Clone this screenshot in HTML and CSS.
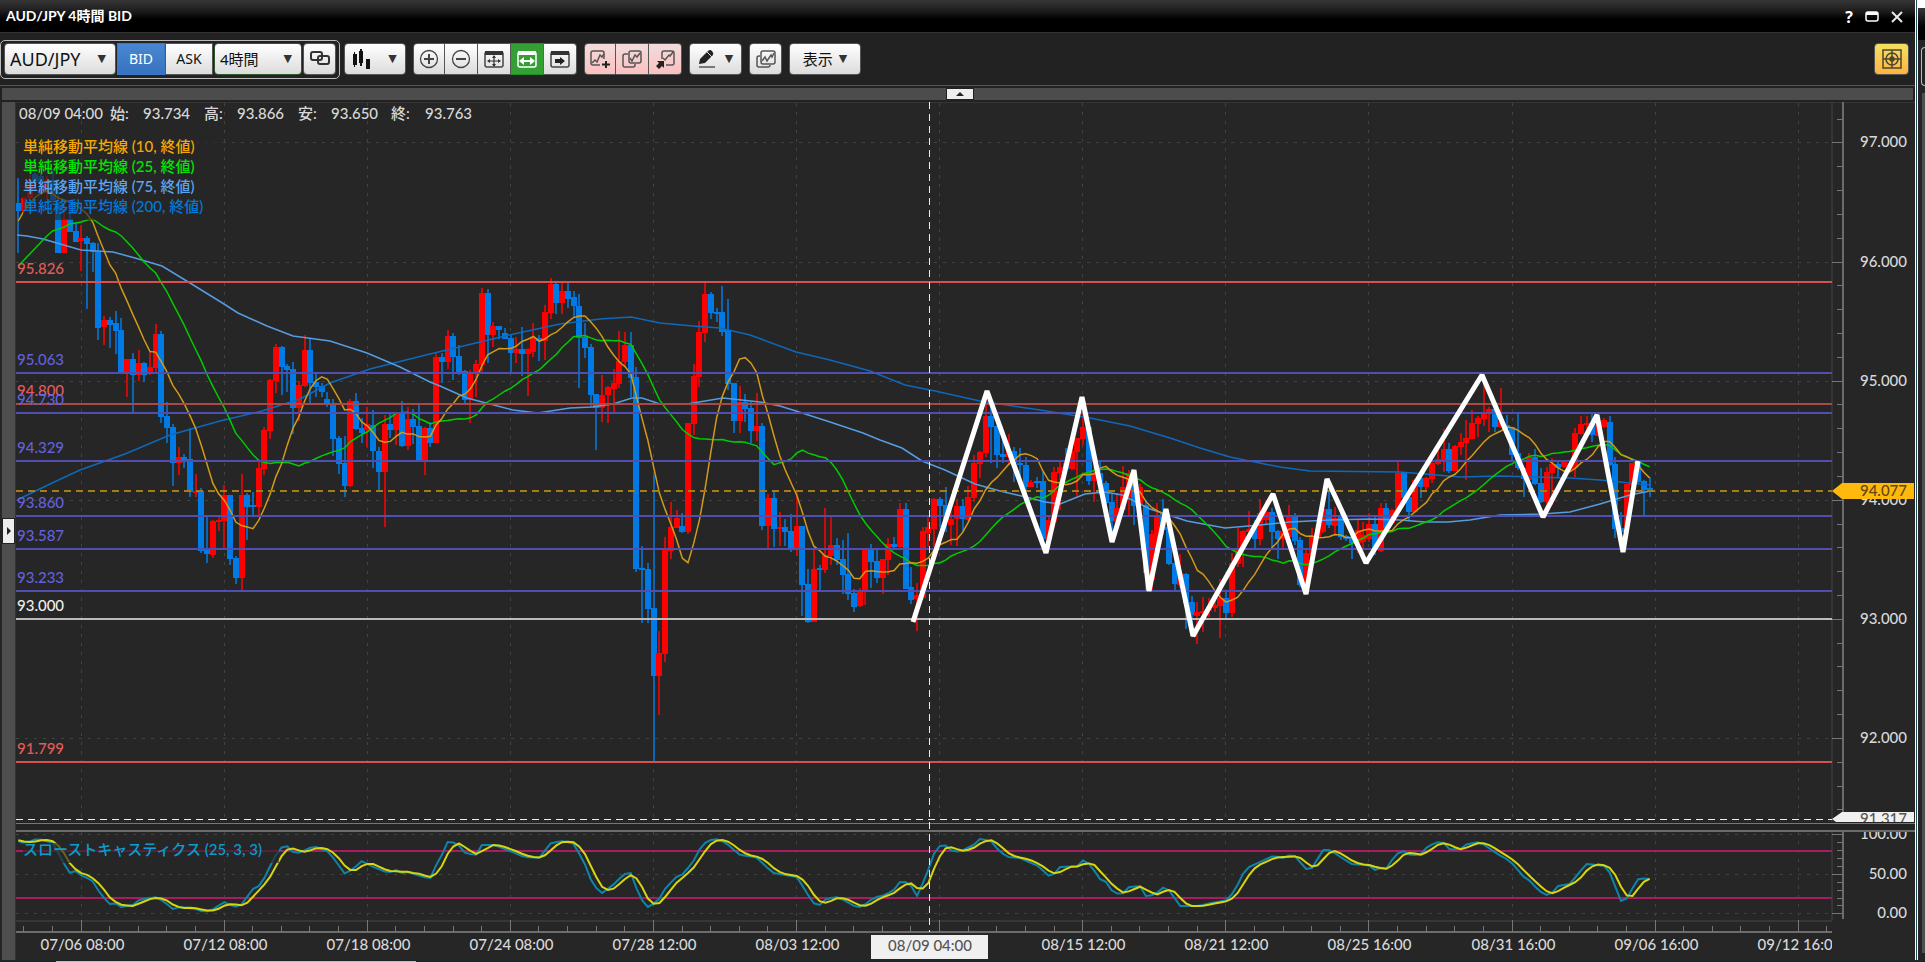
FILE: index.html
```html
<!DOCTYPE html>
<html lang="ja">
<head>
  <meta charset="utf-8">
  <title>AUD/JPY 4時間 BID</title>
  <link rel="stylesheet" href="styles.css">
</head>
<body>
  <div class="desktop">
    <main class="window">
      <header class="titlebar">
        <h1 class="title">AUD/JPY 4時間 BID</h1>
        <div class="window-buttons">
          <button class="window-button" aria-label="ヘルプ">?</button>
          <button class="window-button" aria-label="最大化">
            <svg width="14" height="12" viewBox="0 0 14 12"><rect x="1" y="1" width="12" height="9" rx="2" fill="none" stroke="#fff" stroke-width="1.5"/><path d="M1 1h12v3H1z" fill="#fff"/></svg>
          </button>
          <button class="window-button" aria-label="閉じる">
            <svg width="12" height="12" viewBox="0 0 12 12"><path d="M1 1l10 10M11 1L1 11" stroke="#e8e8e8" stroke-width="2"/></svg>
          </button>
        </div>
      </header>

      <div class="toolbar">
        <div class="frame">
          <div class="picker picker-pair">
            <select aria-label="通貨ペア"><option>AUD/JPY</option></select>
            <span class="arrow">▼</span>
          </div>
          <div class="sides">
            <button class="btn side active">BID</button>
            <button class="btn side">ASK</button>
          </div>
          <div class="picker picker-time">
            <select aria-label="足種"><option>4時間</option></select>
            <span class="arrow">▼</span>
          </div>
          <button class="btn link" aria-label="連動">
            <svg width="20" height="16" viewBox="0 0 20 16" fill="none" stroke="#333" stroke-width="2"><rect x="1" y="1" width="11" height="8" rx="2"/><rect x="8" y="5" width="11" height="8" rx="2"/></svg>
          </button>
        </div>

        <button class="btn candle-type" aria-label="チャート種類">
          <svg width="18" height="20" viewBox="0 0 18 20"><path d="M0 5h4v11H0zM1 3h1v15H1zM6 2h4v12H6zM7 0h2v17H7zM13 10h4v10h-4z" fill="#111"/></svg>
          <span class="arrow">▼</span>
        </button>

        <div class="group">
          <button class="btn" aria-label="拡大">
            <svg width="20" height="20" viewBox="0 0 20 20" fill="none" stroke="#444"><circle cx="10" cy="10" r="8.5" stroke-width="1.3"/><path d="M5 10h10M10 5v10" stroke-width="2"/></svg>
          </button>
          <button class="btn" aria-label="縮小">
            <svg width="20" height="20" viewBox="0 0 20 20" fill="none" stroke="#444"><circle cx="10" cy="10" r="8.5" stroke-width="1.3"/><path d="M5 10h10" stroke-width="2"/></svg>
          </button>
          <button class="btn" aria-label="全体表示">
            <svg width="20" height="18" viewBox="0 0 20 18"><rect x="1" y="2" width="18" height="15" rx="2" fill="none" stroke="#444" stroke-width="1.5"/><path d="M1 1h18v4H1z" fill="#333"/><path d="M5 11h10M10 6v10" stroke="#333" stroke-width="1.2"/><path d="M3 11l3-2v4zM17 11l-3-2v4zM10 5l2 3H8zM10 17l2-3H8z" fill="#333"/></svg>
          </button>
          <button class="btn on" aria-label="横幅固定">
            <svg width="20" height="18" viewBox="0 0 20 18"><rect x="1" y="2" width="18" height="15" rx="2" fill="none" stroke="#fff" stroke-width="1.5"/><path d="M1 1h18v4H1z" fill="#fff"/><path d="M5 11h10" stroke="#fff" stroke-width="2"/><path d="M2 11l5-4v8zM18 11l-5-4v8z" fill="#fff"/></svg>
          </button>
          <button class="btn" aria-label="最新へ">
            <svg width="20" height="18" viewBox="0 0 20 18"><rect x="1" y="2" width="18" height="15" rx="2" fill="none" stroke="#444" stroke-width="1.5"/><path d="M1 1h18v4H1z" fill="#333"/><path d="M5 9h5V7l5 4-5 4v-2H5z" fill="#222"/></svg>
          </button>
        </div>

        <div class="group pink">
          <button class="btn" aria-label="テクニカル追加">
            <svg width="20" height="20" viewBox="0 0 20 20" fill="none" stroke="#555" stroke-width="1.5"><path d="M14 10V4a2 2 0 0 0-2-2H3a2 2 0 0 0-2 2v10a2 2 0 0 0 2 2h7"/><path d="M2 14l3-3 2 2 3-7 2 2 2-3"/><path d="M16 12v7M12 15.5h8" stroke="#222" stroke-width="2"/></svg>
          </button>
          <button class="btn" aria-label="テクニカル一覧">
            <svg width="20" height="20" viewBox="0 0 20 20" fill="none" stroke="#555" stroke-width="1.5"><rect x="7" y="2" width="12" height="12" rx="2"/><path d="M6 5H3a2 2 0 0 0-2 2v9a2 2 0 0 0 2 2h8a2 2 0 0 0 2-2v-1"/><path d="M8 9l2 3 3-6 2 2 3-4"/></svg>
          </button>
          <button class="btn" aria-label="テクニカル呼出">
            <svg width="20" height="20" viewBox="0 0 20 20" fill="none" stroke="#555" stroke-width="1.5"><path d="M7 10V4a2 2 0 0 1 2-2h8a2 2 0 0 1 2 2v10a2 2 0 0 1-2 2h-6"/><path d="M8 9l2 2 4-5 1 1 3-4"/><path d="M2 12h7v7l-2-2-3 3-3-3 3-3z" fill="#222" stroke="none"/></svg>
          </button>
        </div>

        <button class="btn draw" aria-label="描画">
          <svg width="18" height="20" viewBox="0 0 18 20"><path d="M1 15l1-5 8-8q2-2 4 0t1 4l-8 8z" fill="#222"/><path d="M9 3l5 5" stroke="#ddd"/><path d="M1 18h16" stroke="#555" stroke-width="1.5"/></svg>
          <span class="arrow">▼</span>
        </button>
        <button class="btn windows" aria-label="比較チャート">
          <svg width="20" height="20" viewBox="0 0 20 20" fill="none" stroke="#555" stroke-width="1.5"><rect x="5" y="2" width="14" height="13" rx="2"/><path d="M4 7H3a2 2 0 0 0-2 2v7a2 2 0 0 0 2 2h9a2 2 0 0 0 2-2"/><path d="M6 12l3-4 2 4 4-6 1 2 2-4"/></svg>
        </button>
        <button class="btn view">表示 <span class="arrow">▼</span></button>
        <button class="btn target" aria-label="照準">
          <svg width="20" height="20" viewBox="0 0 20 20" fill="none" stroke="#4b4632" stroke-width="1.5"><rect x="1" y="1" width="18" height="18"/><circle cx="10" cy="10" r="6"/><path d="M10 1v18M1 10h18"/><circle cx="10" cy="10" r="2" fill="#4b4632"/></svg>
        </button>
      </div>

      <div class="top-rail"><button class="rail-tab" aria-label="ツールバーを隠す"></button></div>

      <div class="content">
        <div class="side-rail"><button class="side-tab" aria-label="パネルを開く"></button></div>
        <svg class="chart" id="chart" viewBox="16 102 1899 858" role="img" aria-label="AUD/JPY 4時間足チャート"></svg>
      </div>
    </main>

    <aside class="neighbour">
      <div class="neighbour-title"></div>
      <div class="neighbour-frame"></div>
      <div class="neighbour-rail"></div>
    </aside>
  </div>
  <div class="taskbar"><div class="taskbar-item"></div></div>

  <script src="chart.js"></script>
</body>
</html>
```
FILE: styles.css
```css
* {
  box-sizing: border-box;
}

body {
  margin: 0;
  background-color: #262626;
  color: #ddd;
  font-family: Lato, "Noto Sans CJK JP", sans-serif;
  font-size: 15px;
}

.desktop {
  display: flex;
}

.window {
  flex: 1;
  min-width: 0;
  background-color: #222;
}

/* Title bar */
.titlebar {
  display: flex;
  align-items: center;
  justify-content: space-between;
  height: 32px;
  padding: 0 12px 0 6px;
  background: linear-gradient(#363636, #1c1c1c 35%, #000 60%);
}

.title {
  margin: 0;
  color: #fff;
  font-size: 14px;
  line-height: 20px;
  font-weight: bold;
}

.window-buttons {
  display: flex;
  align-items: center;
  gap: 12px;
  padding-top: 2px;
}

.window-button {
  display: flex;
  padding: 0;
  border: 0;
  background: none;
  color: #fff;
  font: bold 16px/16px "Open Sans", sans-serif;
}

/* Toolbar */
.toolbar {
  display: flex;
  align-items: center;
  gap: 7px;
  height: 54px;
  padding: 0 6px 0 0;
  border-top: 1px solid #333;
  border-bottom: 1px solid #565656;
  background-color: #222;
}

.frame {
  display: flex;
  align-items: center;
  gap: 1px;
  height: 39px;
  margin-right: -3px;
  padding: 0 3px;
  border: 1px solid #bbb;
  border-radius: 5px;
}

.btn,
.picker {
  height: 32px;
  border: 1px solid #555;
  border-radius: 4px;
  background: linear-gradient(#fff, #dcdcdc);
  color: #111;
  font: 14px/20px "Noto Sans", "Noto Sans CJK JP", sans-serif;
}

.btn {
  display: flex;
  align-items: center;
  justify-content: center;
  width: 33px;
  padding: 0;
}

.btn svg {
  display: block;
}

.picker {
  display: grid;
  align-items: center;
}

.picker select,
.picker .arrow {
  grid-area: 1 / 1;
}

.picker select {
  width: 100%;
  height: 30px;
  padding: 0 5px;
  border: 0;
  appearance: none;
  background: none;
  color: #111;
  font: inherit;
}

.picker .arrow {
  justify-self: end;
  margin-right: 9px;
  pointer-events: none;
}

.arrow {
  color: #333;
  font: 11px/16px "DejaVu Sans", sans-serif;
}

.picker-pair {
  width: 112px;
  font-size: 18px;
}

.picker-time {
  width: 88px;
  border-color: #2c5a2c;
  font-size: 15px;
}

.sides {
  display: flex;
}

.side {
  width: 48px;
  border-radius: 0;
}

.side.active {
  border-color: #3a78c4;
  background: linear-gradient(#4a87d2, #3672bf);
  color: #fff;
}

.candle-type {
  width: 62px;
  gap: 17px;
}

.group {
  display: flex;
}

.group .btn {
  border-left-width: 0;
  border-radius: 0;
}

.group .btn:first-child {
  width: 32px;
  border-left-width: 1px;
  border-radius: 4px 0 0 4px;
}

.group .btn:last-child {
  border-radius: 0 4px 4px 0;
}

.group .btn.on {
  border-color: #1f8f1f;
  background: #34a034;
}

.group.pink .btn {
  background: linear-gradient(#f3dcdc, #fbc0c0);
}

.draw {
  width: 53px;
  gap: 9px;
}

.view {
  width: 72px;
  gap: 6px;
  font-size: 15px;
}

.target {
  width: 35px;
  margin-left: auto;
  background: linear-gradient(#f3e15f, #ffb340);
}

/* Rails round the chart */
.top-rail {
  display: flex;
  justify-content: center;
  height: 12px;
  margin: 2px;
  padding-left: 4px;
  background-color: #4c4c4c;
}

.rail-tab,
.side-tab {
  display: flex;
  align-items: center;
  justify-content: center;
  padding: 0;
  border: 1px solid #222;
  background-color: #eee;
}

.rail-tab {
  width: 28px;
  height: 12px;
}

.rail-tab::before,
.side-tab::before {
  content: "";
  border: 4px solid transparent;
}

.rail-tab::before {
  border-top: 0;
  border-bottom: 4px solid #222;
}

.content {
  display: flex;
  background-color: #262626;
}

.side-rail {
  display: flex;
  align-items: center;
  width: 14px;
  margin-left: 2px;
  border-right: 1px solid #333;
  background-color: #4e4e4e;
}

.side-tab {
  width: 14px;
  height: 26px;
}

.side-tab::before {
  border-right: 0;
  border-left-color: #222;
}

/* Chart */
.chart {
  display: block;
  flex: 1;
  min-width: 0;
  background-color: #262626;
  font-size: 15px;
  font-weight: 500;
}

.chart text {
  fill: #d8d8d8;
}

.chart line,
.chart polyline {
  fill: none;
}

.grid {
  stroke: #424242;
  stroke-dasharray: 3 6;
}

.axis {
  stroke: #777;
}

.axis-strong {
  stroke: #6c6c6c;
  stroke-width: 2;
}

.border {
  stroke: #363636;
  stroke-width: 2;
}

.up {
  fill: #f00;
}

.down {
  fill: #007be6;
}

.wick-up {
  fill: #c80c0c;
}

.wick-down {
  fill: #0b65b5;
}

.ma {
  stroke-width: 1.5;
}

.ma10 {
  stroke: #d29a18;
}

.ma25 {
  stroke: #0c0;
}

.ma75 {
  stroke: #559ce0;
}

.ma200 {
  stroke: #0e68bb;
}

.level {
  stroke-width: 2;
}

.level-red {
  stroke: #d85050;
}

.level-dim {
  stroke: #a84848;
}

.level-blue {
  stroke: #504eb0;
}

.level-white {
  stroke: #bbb;
}

.chart .text-red {
  fill: #e05c5c;
}

.chart .text-blue {
  fill: #6260dc;
}

.chart .text-white {
  fill: #eee;
}

.chart .text-ma10 {
  fill: #f5a800;
}

.chart .text-ma25 {
  fill: #00e600;
}

.chart .text-ma75 {
  fill: #5aa5f0;
}

.chart .text-ma200 {
  fill: #0078dc;
}

.chart .text-stoch {
  fill: #0a9cd2;
}

.chart .text-tag {
  fill: #555;
}

.chart .text-price {
  fill: #604810;
}

.legend-shade {
  fill: #262626;
  opacity: 0.65;
}

.current {
  stroke: #a67c16;
  stroke-width: 2;
  stroke-dasharray: 7 5;
}

.cross {
  stroke: #eee;
  stroke-dasharray: 7 5;
}

.zigzag {
  stroke: #fff;
  stroke-width: 5;
  stroke-linejoin: bevel;
}

.band {
  stroke: #a81c62;
  stroke-width: 2;
}

.stoch-k {
  stroke: #0e84a8;
  stroke-width: 2;
}

.stoch-d {
  stroke: #d6d610;
  stroke-width: 2;
}

.tag-current {
  fill: #ffb80c;
}

.tag-cross {
  fill: #f0f0f0;
}

.gap {
  fill: #232323;
}

/* Edge of the window on the right */
.neighbour {
  width: 10px;
  border-left: 1px solid #fff;
  background: #242424 linear-gradient(90deg, #1e4f5c 1px, #fff 1px, #fff 2px, transparent 2px) no-repeat;
  padding-left: 2px;
}

.neighbour-title {
  height: 40px;
  border-top: 8px solid #fff;
  background: linear-gradient(#363636, #000 60%);
}

.neighbour-frame {
  height: 39px;
  margin: 7px 0 7px 3px;
  border: 1px solid #bbb;
  border-right: 0;
  border-radius: 5px 0 0 5px;
}

.neighbour-rail {
  height: 860px;
  margin-left: 4px;
  background-color: #4e4e4e;
}

.taskbar {
  height: 2px;
  background-color: #1c262b;
}

.taskbar-item {
  width: 360px;
  height: 2px;
  margin-left: 56px;
  border-top: 1px solid #1c262b;
  background-color: #bbb;
}
```
FILE: chart.js
```js
// One candle per entry: direction (u/d), high, body top, body bottom, low
const candleData = `
d 178 203 211 253,u 196 198 211 213,u 175 180 198 200,d 172 174 182 190,d 174 176 184 192,u 176 180 190 200,d 172 180 200 205,d 190 205 253 253,u 205 219 253 253,d 205 219 232 232,
d 222 231 242 242,u 225 238 241 271,d 236 238 244 309,d 242 243 252 272,d 243 252 328 340,u 316 320 327 345,d 317 320 325 348,d 311 323 331 354,d 318 330 372 372,u 359 359 372 397,
d 353 359 375 412,u 350 363 375 381,d 362 363 375 382,u 352 367 374 375,u 324 334 368 373,d 331 334 417 423,d 402 416 428 443,d 424 427 463 486,u 447 457 463 475,d 454 457 460 468,
d 428 459 492 497,u 474 491 493 497,d 488 491 551 553,d 517 549 554 563,u 520 521 555 558,u 516 520 522 531,u 485 495 521 549,d 495 495 559 565,d 556 558 578 584,u 474 495 578 590,
d 493 495 507 540,d 492 505 507 516,u 462 468 507 515,u 427 430 469 475,u 379 380 431 439,u 344 347 381 393,d 346 347 367 395,d 364 366 370 392,d 362 369 408 434,u 381 385 408 421,
u 335 350 386 387,d 339 350 383 405,d 373 382 387 397,d 383 386 392 397,d 392 399 405 407,d 399 405 439 456,d 436 438 464 474,d 436 463 486 497,u 399 401 486 487,d 393 401 429 430,
d 418 428 433 443,u 407 424 430 447,d 410 425 451 468,d 447 451 472 492,u 415 424 472 527,d 413 424 430 438,u 412 413 430 445,d 401 413 446 447,u 407 419 446 450,d 409 419 427 444,
d 403 426 460 460,u 427 428 460 475,d 422 428 443 447,u 353 357 443 443,d 353 357 362 383,u 330 336 362 369,d 333 336 357 380,d 345 356 372 375,d 370 371 400 403,u 370 372 400 423,
u 360 364 372 397,u 288 293 365 373,d 289 293 335 363,u 322 326 335 347,d 326 326 330 339,d 328 333 339 339,d 335 338 353 373,u 337 349 353 363,d 327 349 354 376,u 348 349 354 396,
u 323 337 352 357,d 335 338 341 361,u 305 312 341 360,u 278 284 313 319,d 282 284 303 314,u 281 291 303 314,d 283 291 299 308,d 291 297 306 317,d 294 306 338 388,d 323 337 348 358,
d 344 347 395 407,d 394 394 408 450,u 375 395 408 422,u 386 387 395 423,u 369 383 389 412,u 331 361 384 388,u 332 345 362 367,d 332 345 378 397,d 367 377 569 572,d 546 568 570 623,
d 563 569 609 623,d 475 608 676 762,u 631 653 676 715,u 537 550 654 662,u 502 527 551 559,u 510 518 528 528,d 513 526 532 533,u 423 423 532 534,u 364 376 424 435,u 321 332 377 387,
u 282 294 333 342,d 292 294 313 319,d 308 312 314 322,d 286 312 332 336,d 299 330 384 390,d 383 383 421 433,u 386 402 421 433,d 394 402 409 422,d 402 408 431 443,u 393 426 431 441,
d 423 426 526 530,u 494 498 526 548,d 490 498 529 547,u 512 527 529 546,d 519 527 532 546,d 514 531 548 552,u 490 526 548 556,d 526 526 585 616,d 569 584 622 623,u 550 569 622 622,
d 565 568 570 592,u 508 555 570 573,u 517 545 556 565,d 538 545 560 565,d 540 559 575 594,d 533 574 594 600,d 589 593 607 612,u 588 590 606 607,u 549 549 591 605,d 544 549 562 588,
d 549 561 578 583,u 559 559 578 594,u 538 544 560 575,d 537 544 547 550,u 503 509 547 548,d 503 509 589 589,d 567 587 600 604,u 583 595 599 631,u 527 531 598 600,u 517 527 533 547,
u 498 499 529 547,d 497 499 506 527,d 487 505 520 532,u 507 519 525 545,u 499 506 519 546,d 499 506 519 532,u 486 497 520 521,u 455 463 498 502,u 451 452 464 478,u 390 416 453 457,
d 407 416 427 463,d 425 426 455 468,d 440 454 457 463,u 434 452 457 465,d 447 451 463 482,d 448 463 465 483,d 457 465 487 490,u 480 482 487 487,d 477 481 483 488,d 472 481 539 543,
u 517 520 540 541,u 467 472 522 527,u 461 467 473 510,d 448 463 469 472,u 447 451 469 470,u 438 438 452 498,u 412 427 439 445,d 423 427 481 485,u 463 473 481 502,d 462 473 483 493,
d 481 483 503 504,d 493 502 521 540,u 493 508 522 527,u 466 487 510 513,u 470 473 497 516,d 472 477 506 525,u 484 487 504 506,d 500 505 573 592,u 530 534 580 590,u 503 517 553 560,
d 499 513 530 535,d 523 527 564 565,d 562 563 584 592,u 554 573 585 588,d 573 574 603 629,d 596 602 615 623,u 602 612 616 644,u 597 611 613 632,u 598 607 611 617,u 597 605 608 612,
u 579 598 606 638,d 590 598 613 619,u 553 563 613 617,u 528 548 564 567,u 530 531 549 567,u 511 529 532 540,d 520 527 539 549,u 499 513 539 545,u 500 512 520 524,d 508 512 532 547,
d 530 531 539 559,u 530 532 539 549,u 505 516 537 543,d 513 516 541 545,d 537 540 585 587,u 550 553 587 590,u 528 537 555 557,u 523 530 538 540,u 507 509 532 533,d 490 509 525 528,
u 507 518 526 536,d 513 517 537 540,d 535 536 539 541,d 537 537 543 559,u 519 530 543 553,u 522 535 542 550,u 513 524 539 542,d 517 524 550 555,u 503 508 551 552,d 503 508 528 529,
u 509 510 523 524,u 461 473 512 513,d 472 472 498 499,d 496 497 512 520,u 479 480 512 513,d 477 478 487 498,u 477 478 487 490,u 462 463 479 483,u 450 459 464 465,u 429 449 460 472,
d 443 449 471 473,u 445 446 471 471,u 433 442 447 455,u 420 438 443 480,u 410 423 439 439,u 416 418 424 437,u 378 414 419 426,u 407 409 414 432,d 408 409 427 432,u 388 422 427 428,
d 415 425 429 430,d 427 427 455 460,d 412 453 468 470,d 467 468 479 497,u 453 457 480 481,d 449 457 484 485,d 468 483 502 503,u 467 472 502 505,u 458 464 473 505,d 460 464 468 477,
u 461 462 467 468,u 460 463 469 471,u 428 433 468 477,u 416 424 434 435,u 416 423 425 430,d 414 423 435 442,u 420 422 436 436,u 418 420 427 428,d 416 422 465 466,d 457 464 529 538,
d 512 528 532 535,u 484 484 527 528,u 463 463 485 486,d 462 463 482 483,d 480 481 490 517,d 477 488 492 497`;

const candles = candleData.trim().split(",").map(row => {
  const [dir, high, top, bottom, low] = row.trim().split(" ");
  return { up: dir === "u", high: +high, top: +top, bottom: +bottom, low: +low };
});

// Averages before enough candles are on screen
const seed10 = [221, 211, 203, 197, 193, 191, 194, 198, 200, 202, 205, 209, 214, 222, 237, 251, 265];
const seed25 = [266, 260, 254, 248, 242, 236, 231, 229, 227, 224, 223, 222, 220, 219, 223, 227, 230, 232, 236, 242, 248, 255, 262, 268, 273];

const ma75 = "17,235 27,236 43,239 81,250 113,252 135,258 162,266 190,283 224,304 238,313 267,326 293,336 330,341 367,353 400,367 430,382 440,386 467,398 486,403 513,410 538,413 570,408 592,407 613,404 632,398 642,398 660,404 687,404 723,398 760,402 780,406 796,411 830,422 863,433 880,440 902,448 922,461 945,470 975,484 1000,491 1030,498 1045,502 1060,504 1085,494 1105,492 1122,495 1150,509 1187,521 1225,528 1260,525 1290,522 1330,520 1370,519 1400,520 1425,522 1448,522 1470,520 1500,515 1542,514 1570,512 1600,504 1630,495 1650,491";
const ma200 = "17,500 50,484 80,470 125,454 170,435 220,421 262,411 300,399 330,383 370,369 430,354 505,336 560,324 600,319 631,317 660,323 693,326 720,328 750,335 796,352 830,360 870,371 905,385 935,391 980,401 1040,410 1090,418 1130,426 1170,438 1200,448 1230,457 1280,467 1310,471 1400,472 1425,474 1460,477 1500,476 1570,478 1600,480 1630,483 1650,485";
const zigzag = "913,622 987,391 1046,553 1082,397 1112,542 1134,470 1149,591 1166,509 1193,636 1273,494 1306,594 1327,479 1366,563 1482,375 1543,517 1597,415 1623,552 1638,461";

const stochK = "17,840 22,844 37,839 43,840 53,843 61,858 69,873 76,871 82,876 92,880 100,893 109,904 115,903 121,907 133,905 139,900 155,897 163,901 173,909 180,907 196,909 204,912 212,910 224,902 235,907 241,905 253,889 259,886 265,877 273,860 280,848 287,846 293,852 300,853 309,848 316,847 329,852 345,874 353,869 362,861 369,865 388,873 396,870 402,873 408,872 430,879 435,867 441,857 447,842 457,843 465,853 476,855 482,845 494,845 510,851 524,857 539,858 551,843 563,841 573,843 584,862 591,880 597,889 602,893 612,886 624,874 631,873 640,898 648,907 658,901 664,890 676,877 683,874 693,862 699,850 705,843 711,840 718,839 726,843 740,855 756,857 773,873 797,877 813,903 820,905 826,899 838,897 856,907 862,907 873,898 885,895 893,891 900,882 909,882 917,896 922,885 929,868 935,851 939,846 945,845 950,850 960,852 975,844 980,839 991,841 999,851 1008,857 1020,858 1038,866 1049,876 1056,873 1060,867 1079,866 1084,859 1091,866 1100,879 1106,882 1111,890 1118,894 1124,893 1129,887 1140,886 1146,896 1154,895 1164,887 1170,891 1180,906 1199,906 1211,903 1228,900 1236,888 1244,872 1249,867 1273,856 1284,858 1290,855 1295,856 1306,869 1312,868 1317,860 1323,850 1330,850 1342,858 1352,864 1368,865 1375,870 1381,868 1386,869 1396,854 1404,851 1410,855 1420,855 1426,848 1436,842 1444,843 1449,849 1459,850 1467,844 1480,842 1496,853 1510,861 1524,877 1530,881 1539,891 1547,895 1552,893 1558,886 1570,884 1586,864 1607,866 1621,901 1628,898 1633,887 1639,878 1650,879"
  .split(" ").map(p => p.split(",").map(Number));

const left = 16;
const right = 1832;
const edge = 1915;
const step = 5.724;
const xOf = i => 18.3 + step * i;
const priceY = p => Math.round(142.4 + (97 - p) * 119.1);
const stochY = v => Math.round(834.3 + (100 - v) * 0.79);

const out = [];
const line = (x1, y1, x2, y2, cls) => out.push(`<line x1="${x1}" y1="${y1}" x2="${x2}" y2="${y2}" class="${cls}"/>`);
const rect = (x, y, w, h, cls) => out.push(`<rect x="${x}" y="${y}" width="${w}" height="${h}" class="${cls}"/>`);
const poly = (points, cls) => out.push(`<polyline points="${points}" class="${cls}"/>`);
const text = (x, y, str, cls = "", anchor = "start", extra = "") =>
  out.push(`<text x="${x}" y="${y}" class="${cls}" text-anchor="${anchor}" ${extra}>${str}</text>`);

// Simple moving average of the closes
function average(period, seed) {
  return candles.map((c, i) => {
    if (i < seed.length) return xOf(i).toFixed(1) + "," + seed[i];
    let sum = 0;
    for (let k = i - period + 1; k <= i; k++) {
      sum += candles[k].up ? candles[k].top : candles[k].bottom;
    }
    return xOf(i).toFixed(1) + "," + (sum / period).toFixed(1);
  }).join(" ");
}

// %K value at any x, between the known points
function kAt(x) {
  let n = 1;
  while (n < stochK.length - 1 && stochK[n][0] < x) n++;
  const [x0, y0] = stochK[n - 1];
  const [x1, y1] = stochK[n];
  return y0 + (y1 - y0) * Math.max(0, Math.min(1, (x - x0) / (x1 - x0)));
}

out.push(`<defs>
  <clipPath id="plot-clip"><rect x="16" y="102" width="1816" height="858"/></clipPath>
  <clipPath id="price-clip"><rect x="16" y="102" width="1899" height="720"/></clipPath>
  <clipPath id="stoch-clip"><rect x="16" y="832" width="1899" height="100"/></clipPath>
</defs>`);

// Grid
const dates = ["07/06 08:00", "07/12 08:00", "07/18 08:00", "07/24 08:00", "07/28 12:00", "08/03 12:00", "", "08/15 12:00", "08/21 12:00", "08/25 16:00", "08/31 16:00", "09/06 16:00", "09/12 16:00"];
const dateX = n => Math.floor(81 + 143.1 * n) + 0.5;
dates.forEach((d, n) => line(dateX(n), 103, dateX(n), 920, "grid"));
for (let p = 97; p >= 92; p--) line(left, priceY(p) + 0.5, right, priceY(p) + 0.5, "grid");
[100, 50, 0].forEach(v => line(left, stochY(v) + 0.5, right, stochY(v) + 0.5, "grid"));
line(left, 102, edge, 102, "border");
line(right, 102, right, 920, "border");
line(left, 921, right, 921, "border");

// Candles
candles.forEach((c, i) => {
  const x = Math.round(xOf(i));
  rect(x - 1, c.high, 2, c.low - c.high, c.up ? "wick-up" : "wick-down");
  rect(x - 3, c.top, 6, Math.max(2, c.bottom - c.top), c.up ? "up" : "down");
});

poly(ma200, "ma ma200");
poly(ma75, "ma ma75");
poly(average(25, seed25), "ma ma25");
poly(average(10, seed10), "ma ma10");

// Horizontal levels
const levels = [
  [95.826, "red", "red"], [95.063, "blue", "blue"], [94.8, "dim", "red"], [94.73, "blue", "blue"],
  [94.329, "blue", "blue"], [93.86, "blue", "blue"], [93.587, "blue", "blue"], [93.233, "blue", "blue"],
  [93, "white", "white"], [91.799, "red", "red"]
];
levels.forEach(([p, tone, ink]) => {
  line(left, priceY(p), right, priceY(p), "level level-" + tone);
  text(17, priceY(p) - 8, p.toFixed(3), "text-" + ink);
});
line(left, 491, right, 491, "current");

// Legend
rect(23, 138, 194, 82, "legend-shade");
[[10, 152], [25, 172], [75, 192], [200, 212]].forEach(([n, y]) =>
  text(23, y, `単純移動平均線 (${n}, 終値)`, "text-ma" + n));
text(19, 119, "08/09 04:00");
[["始:", 110], ["高:", 204], ["安:", 298], ["終:", 391]].forEach(([s, x]) => text(x, 119, s));
[["93.734", 143], ["93.866", 237], ["93.650", 331], ["93.763", 425]].forEach(([s, x]) => text(x, 119, s));

// Price axis
line(1843, 102, 1843, 822, "axis-strong");
for (let n = 0; n <= 29; n++) {
  const y = priceY(97.2 - n * 0.2) + 0.5;
  line(n % 5 === 1 ? right : 1837, y, 1843, y, "axis");
}
for (let p = 97; p >= 92; p--) text(1907, priceY(p) + 5, p.toFixed(3), "", "end");
out.push('<polygon points="1832,491 1842,483 1914,483 1914,499 1842,499" class="tag-current"/>');
text(1907, 496, "94.077", "text-price", "end");

// Stochastics pane
rect(left, 822, 1899, 10, "gap");
line(left, 823.5, edge, 823.5, "axis");
line(left, 831, edge, 831, "axis-strong");
line(left, 851, right, 851, "band");
line(left, 898, right, 898, "band");
poly(candles.map((c, i) => `${xOf(i).toFixed(1)},${kAt(xOf(i)).toFixed(1)}`).join(" "), "stoch-k");
poly(candles.map((c, i) => {
  const k = (kAt(xOf(i)) + kAt(xOf(i - 1)) + kAt(xOf(i - 2))) / 3;
  return `${xOf(i).toFixed(1)},${k.toFixed(1)}`;
}).join(" "), "stoch-d");
rect(23, 843, 256, 20, "legend-shade");
text(23, 855, "スローストキャスティクス (25, 3, 3)", "text-stoch");
line(1843, 832, 1843, 919, "axis-strong");
for (let v = 100; v >= 0; v -= 10) {
  line(v % 50 ? 1837 : right, stochY(v) + 0.5, 1843, stochY(v) + 0.5, "axis");
}
[100, 50, 0].forEach(v => text(1907, stochY(v) + 5, v.toFixed(2), "", "end", 'clip-path="url(#stoch-clip)"'));

// Time axis
line(left, 932, right, 932, "axis-strong");
for (let n = -2; n <= 61; n++) {
  const x = Math.floor(81 + 28.62 * n) + 0.5;
  line(x, n % 5 === 0 ? 920 : 926, x, 932, "axis");
}
dates.forEach((d, n) => text(dateX(n) + 1, 950, d, "", "middle", 'clip-path="url(#plot-clip)"'));

// Crosshair
line(929.5, 102, 929.5, 932, "cross");
line(left, 819.5, right, 819.5, "cross");
rect(871, 935, 117, 24, "tag-cross");
text(930, 951, "08/09 04:00", "text-tag", "middle");
out.push('<polygon points="1832,819 1842,812 1914,812 1914,822 1836,822" class="tag-cross"/>');
text(1907, 824, "91.317", "text-tag", "end", 'clip-path="url(#price-clip)"');

poly(zigzag, "zigzag");

document.getElementById("chart").innerHTML = out.join("");
```
